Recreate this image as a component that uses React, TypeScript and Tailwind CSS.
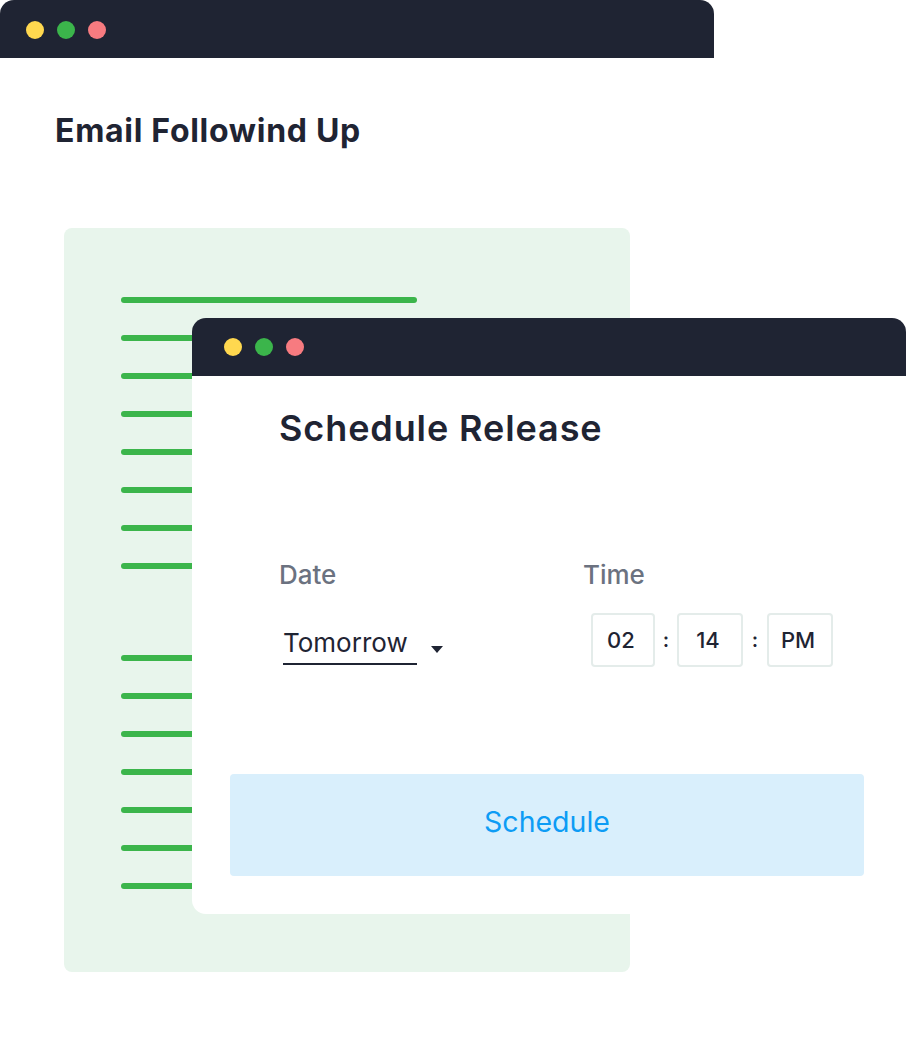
import React from 'react';

const Dots: React.FC = () => (
    <>
        <span className="w-[18px] h-[18px] rounded-full bg-[#ffd84f]"></span>
        <span className="w-[18px] h-[18px] rounded-full bg-[#3bb54b]"></span>
        <span className="w-[18px] h-[18px] rounded-full bg-[#f77b80]"></span>
    </>
);

const Line: React.FC<{ wide?: boolean }> = ({ wide }) => (
    <div className={`h-[6px] rounded-full bg-[#3bb54b] ${wide ? 'w-[296px]' : 'w-[200px]'}`}></div>
);

const TimeBox: React.FC<{ value: string; w: string }> = ({ value, w }) => (
    <div className={`${w} h-[54px] border-2 border-[#e4ecea] rounded-[4px] flex items-center justify-center pr-[4px] text-[22px] font-medium text-[#1f2433]`}>
        {value}
    </div>
);

const App: React.FC = () => {
    return (
        <div className="relative w-[906px] h-[1042px] bg-white overflow-hidden font-['Inter','Liberation_Sans',sans-serif] text-[#1f2433]">
            {/* back window */}
            <div className="w-[714px] h-[58px] bg-[#1f2433] rounded-t-[14px] flex items-center gap-[13px] pl-[26px] pt-[2px]">
                <Dots />
            </div>
            <h1 className="ml-[55px] mt-[57px] text-[32px] leading-[32px] font-bold tracking-[0.7px]">Email Followind Up</h1>

            <div className="ml-[64px] mt-[81px] w-[566px] h-[744px] rounded-[8px] bg-[#e8f5ec] pt-[69px] pl-[57px]">
                <div className="flex flex-col gap-[32px]">
                    <Line wide />
                    <Line />
                    <Line />
                    <Line />
                    <Line />
                    <Line />
                    <Line />
                    <Line />
                </div>
                <div className="flex flex-col gap-[32px] mt-[86px]">
                    <Line />
                    <Line />
                    <Line />
                    <Line />
                    <Line />
                    <Line />
                    <Line />
                </div>
            </div>

            {/* front window */}
            <div className="absolute left-[192px] top-[318px] w-[714px]">
                <div className="h-[58px] bg-[#1f2433] rounded-t-[14px] flex items-center gap-[13px] pl-[32px]">
                    <Dots />
                </div>
                <div className="h-[538px] bg-white rounded-b-[14px] pt-[34px]">
                    <div className="pl-[87px]">
                        <h2 className="text-[36px] leading-[36px] font-semibold tracking-[0.9px]">Schedule Release</h2>
                        <div className="flex mt-[116px]">
                            <div className="w-[304px]">
                                <div className="text-[26px] leading-[26px] font-medium text-[#6b7280]">Date</div>
                                <div className="flex items-start mt-[42px]">
                                    <div className="ml-[4px] w-[134px] border-b-2 border-[#1f2433] pb-[7px] text-[26px] leading-[26px]">Tomorrow</div>
                                    <div className="ml-[14px] mt-[16px] w-0 h-0 border-l-[6px] border-r-[6px] border-t-[7px] border-l-transparent border-r-transparent border-t-[#1f2433]"></div>
                                </div>
                            </div>
                            <div>
                                <div className="text-[26px] leading-[26px] font-medium text-[#6b7280]">Time</div>
                                <div className="flex items-center mt-[25px] ml-[8px]">
                                    <TimeBox value="02" w="w-[64px]" />
                                    <span className="w-[22px] text-center text-[20px] font-semibold">:</span>
                                    <TimeBox value="14" w="w-[66px]" />
                                    <span className="w-[24px] text-center text-[20px] font-semibold">:</span>
                                    <TimeBox value="PM" w="w-[66px]" />
                                </div>
                            </div>
                        </div>
                    </div>
                    <button className="ml-[38px] mt-[107px] w-[634px] h-[102px] rounded-[4px] bg-[#d9effc] text-[#0d9cf5] text-[28.5px] pb-[5px]">
                        Schedule
                    </button>
                </div>
            </div>
        </div>
    );
};

export default App;
